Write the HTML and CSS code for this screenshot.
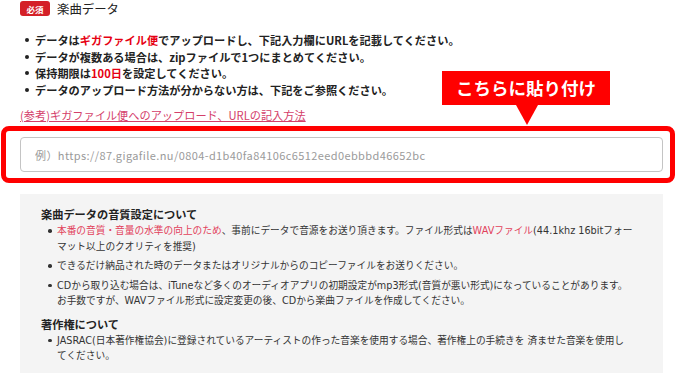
FILE: index.html
```html
<!DOCTYPE html>
<html lang="ja">
<head>
    <meta charset="UTF-8">
    <meta name="viewport" content="width=device-width, initial-scale=1.0">
    <title>楽曲データ</title>
    <link rel="stylesheet" href="styles.css">
</head>
<body>

    <div class="page">
        <div class="field-head">
            <span class="badge">必須</span>
            <span class="field-title">楽曲データ</span>
        </div>

        <ul class="notes">
            <li>データは<span class="red">ギガファイル便</span>でアップロードし、下記入力欄にURLを記載してください。</li>
            <li>データが複数ある場合は、zipファイルで1つにまとめてください。</li>
            <li>保持期限は<span class="red">100日</span>を設定してください。</li>
            <li>データのアップロード方法が分からない方は、下記をご参照ください。</li>
        </ul>

        <a class="howto" href="#">(参考)ギガファイル便へのアップロード、URLの記入方法</a>

        <!-- 入力欄 -->
        <div class="paste-box">
            <div class="callout">こちらに貼り付け</div>
            <input type="text" class="url-input" placeholder="例）https://87.gigafile.nu/0804-d1b40fa84106c6512eed0ebbbd46652bc">
        </div>

        <div class="info-panel">
            <h3>楽曲データの音質設定について</h3>
            <ul>
                <li><span class="pink">本番の音質・音量の水準の向上のため</span>、事前にデータで音源をお送り頂きます。ファイル形式は<span class="pink">WAVファイル</span>(44.1khz 16bitフォーマット以上のクオリティを推奨)</li>
                <li>できるだけ納品された時のデータまたはオリジナルからのコピーファイルをお送りください。</li>
                <li>CDから取り込む場合は、iTuneなど多くのオーディオアプリの初期設定がmp3形式(音質が悪い形式)になっていることがあります。お手数ですが、WAVファイル形式に設定変更の後、CDから楽曲ファイルを作成してください。</li>
            </ul>

            <h3>著作権について</h3>
            <ul>
                <li>JASRAC(日本著作権協会)に登録されているアーティストの作った音楽を使用する場合、著作権上の手続きを 済ませた音楽を使用してください。</li>
            </ul>
        </div>
    </div>

</body>
</html>
```

FILE: styles.css
```css
        body {
            font-family: "Noto Sans CJK JP", "Noto Sans", sans-serif;
            background-color: #fff;
            color: #222;
            margin: 0;
            padding: 0;
        }

        .page {
            width: 643px;
            padding: 0 13px 0 20px;
        }

        .field-head {
            display: flex;
            align-items: center;
            gap: 7px;
            height: 18px;
        }

        .badge {
            display: flex;
            align-items: center;
            justify-content: center;
            width: 30px;
            height: 15px;
            margin-top: -1px;
            background-color: #d42027;
            color: #fff;
            border-radius: 3px;
            font-size: 8.5px;
            font-weight: bold;
        }

        .field-title {
            font-size: 12.4px;
            line-height: 18px;
        }

        .notes {
            list-style: none;
            margin: 14px 0 0;
            padding: 0 0 0 15px;
        }

        .notes li {
            position: relative;
            font-size: 11.2px;
            font-weight: bold;
            line-height: 16.5px;
        }

        .notes li::before {
            content: "";
            position: absolute;
            left: -10px;
            top: 6px;
            width: 4px;
            height: 4px;
            border-radius: 50%;
            background-color: #222;
        }

        .red {
            color: #e60012;
        }

        .howto {
            display: block;
            margin-top: 9px;
            font-size: 11.2px;
            line-height: 16.5px;
            color: #d4406a;
            text-decoration: underline;
        }

        .paste-box {
            position: relative;
            margin: 2.5px -12px 0 -19px;
            padding: 6px 7px 6px 14px;
            border: 5px solid #f00;
            border-radius: 8px;
        }

        .callout {
            position: absolute;
            left: 436px;
            top: -60px;
            width: 168px;
            height: 34px;
            background-color: #f00;
            color: #fff;
            font-size: 17.5px;
            font-weight: bold;
            line-height: 34px;
            text-align: center;
        }

        .callout::after {
            content: "";
            position: absolute;
            left: 74px;
            top: 34px;
            border-left: 11px solid transparent;
            border-right: 11px solid transparent;
            border-top: 20px solid #f00;
        }

        .url-input {
            display: block;
            width: 100%;
            height: 35px;
            box-sizing: border-box;
            padding: 0 14px;
            border: 1px solid #c4c4c4;
            border-radius: 4px;
            font-family: inherit;
            font-size: 11px;
            letter-spacing: 0.4px;
            color: #333;
        }

        .url-input::placeholder {
            color: #9a9a9a;
        }

        .info-panel {
            margin-top: 11px;
            padding: 11px 30px 9px 21px;
            background-color: #f4f4f4;
        }

        .info-panel h3 {
            margin: 0;
            font-size: 11.2px;
            line-height: 18px;
            font-weight: bold;
            color: #222;
        }

        .info-panel ul {
            list-style: none;
            margin: 0 0 6px;
            padding: 0 0 0 16px;
        }

        .info-panel ul:last-child {
            margin-bottom: 0;
        }

        .info-panel li {
            position: relative;
            font-family: "DejaVu Sans", "Noto Sans CJK JP", sans-serif;
            font-size: 9.7px;
            line-height: 15.5px;
            color: #333;
            margin-bottom: 4px;
        }

        .info-panel li:last-child {
            margin-bottom: 0;
        }

        .info-panel li::before {
            content: "";
            position: absolute;
            left: -9px;
            top: 6px;
            width: 3.5px;
            height: 3.5px;
            border-radius: 50%;
            background-color: #333;
        }

        .pink {
            color: #e2415b;
        }
```
